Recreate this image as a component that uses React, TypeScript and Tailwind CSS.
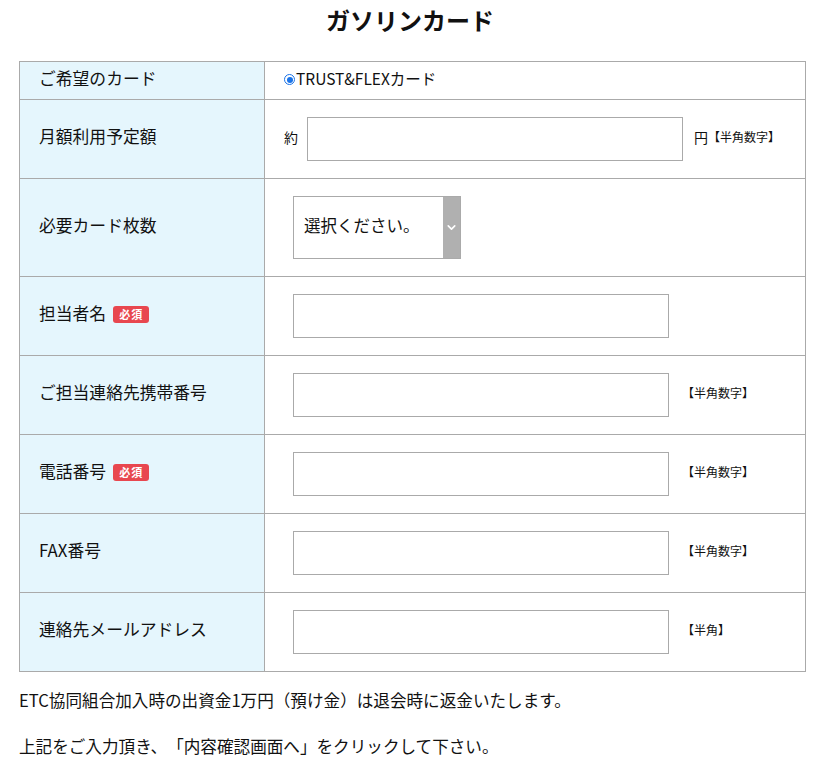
import React from 'react';
import { ChevronDown } from 'lucide-react';

const font = { fontFamily: '"Noto Sans CJK JP", "Noto Sans", sans-serif' };

const Required: React.FC = () => (
  <span className="ml-[7px] inline-flex h-[17px] w-[36px] items-center justify-center rounded-[3px] bg-[#e8474f] text-[11px] font-bold leading-none tracking-[1px] text-white">
    必須
  </span>
);

const Label: React.FC<{ children: React.ReactNode; h: string }> = ({ children, h }) => (
  <div className={`${h} flex items-center border-b border-r border-[#aaaaaa] bg-[#e5f6fd] pb-[4px] pl-[19px] text-[16.8px] text-[#111]`}>
    {children}
  </div>
);

const Cell: React.FC<{ children: React.ReactNode; h: string }> = ({ children, h }) => (
  <div className={`${h} flex items-center border-b border-r border-[#aaaaaa] pl-[19px]`}>{children}</div>
);

const TextBox: React.FC = () => (
  <input type="text" className="h-[44px] w-[376px] border border-[#aaaaaa] bg-white px-2 outline-none" />
);

const Note: React.FC<{ children: React.ReactNode }> = ({ children }) => (
  <span className="mb-[4px] ml-[13px] text-[12px] text-[#111]">{children}</span>
);

const App: React.FC = () => {
  return (
    <div className="min-h-[773px] w-[820px] bg-white text-[#111] [text-spacing-trim:space-all]" style={font}>
      <h1 className="h-[40px] text-center text-[24px] font-bold leading-[40px] text-[#111]">ガソリンカード</h1>

      <div className="ml-[19px] mt-[21px] grid w-[787px] grid-cols-[245px_541px] border-l border-t border-[#aaaaaa]">
        <Label h="h-[38px]">ご希望のカード</Label>
        <Cell h="h-[38px]">
          <label className="mb-[4px] flex items-center text-[15.5px]">
            <span className="mr-[1px] mt-[2px] flex h-[11px] w-[11px] items-center justify-center rounded-full border-[1.5px] border-[#1a73e8]">
              <span className="h-[6px] w-[6px] rounded-full bg-[#1a73e8]" />
            </span>
            TRUST&amp;FLEXカード
          </label>
        </Cell>

        <Label h="h-[79px]">月額利用予定額</Label>
        <Cell h="h-[79px]">
          <span className="mb-[4px] mr-[9px] text-[14px]">約</span>
          <TextBox />
          <span className="mb-[4px] ml-[11px] text-[14px]">円</span>
          <span className="mb-[4px] text-[12px]">【半角数字】</span>
        </Cell>

        <Label h="h-[98px]">必要カード枚数</Label>
        <Cell h="h-[98px]">
          <div className="ml-[9px] flex h-[63px] w-[168px] border border-[#aaaaaa]">
            <select className="flex-1 appearance-none bg-white pb-[4px] pl-[10px] text-[16.5px] text-[#111] outline-none" style={font}>
              <option>選択ください。</option>
              <option>1枚</option>
              <option>2枚</option>
              <option>3枚</option>
            </select>
            <div className="flex w-[17px] items-center justify-center bg-[#b0b0b0]">
              <ChevronDown size={13} strokeWidth={3} className="text-white" />
            </div>
          </div>
        </Cell>

        <Label h="h-[79px]">
          担当者名
          <Required />
        </Label>
        <Cell h="h-[79px]">
          <div className="ml-[9px]">
            <TextBox />
          </div>
        </Cell>

        <Label h="h-[79px]">ご担当連絡先携帯番号</Label>
        <Cell h="h-[79px]">
          <div className="ml-[9px] flex items-center">
            <TextBox />
            <Note>【半角数字】</Note>
          </div>
        </Cell>

        <Label h="h-[79px]">
          電話番号
          <Required />
        </Label>
        <Cell h="h-[79px]">
          <div className="ml-[9px] flex items-center">
            <TextBox />
            <Note>【半角数字】</Note>
          </div>
        </Cell>

        <Label h="h-[79px]">FAX番号</Label>
        <Cell h="h-[79px]">
          <div className="ml-[9px] flex items-center">
            <TextBox />
            <Note>【半角数字】</Note>
          </div>
        </Cell>

        <Label h="h-[79px]">連絡先メールアドレス</Label>
        <Cell h="h-[79px]">
          <div className="ml-[9px] flex items-center">
            <TextBox />
            <Note>【半角】</Note>
          </div>
        </Cell>
      </div>

      <p className="ml-[19px] mt-[16px] text-[16.6px] leading-[24px]">
        ETC協同組合加入時の出資金1万円（預け金）は退会時に返金いたします。
      </p>
      <p className="ml-[19px] mt-[22px] text-[16.6px] leading-[24px]">
        上記をご入力頂き、「内容確認画面へ」をクリックして下さい。
      </p>
    </div>
  );
};

export default App;
